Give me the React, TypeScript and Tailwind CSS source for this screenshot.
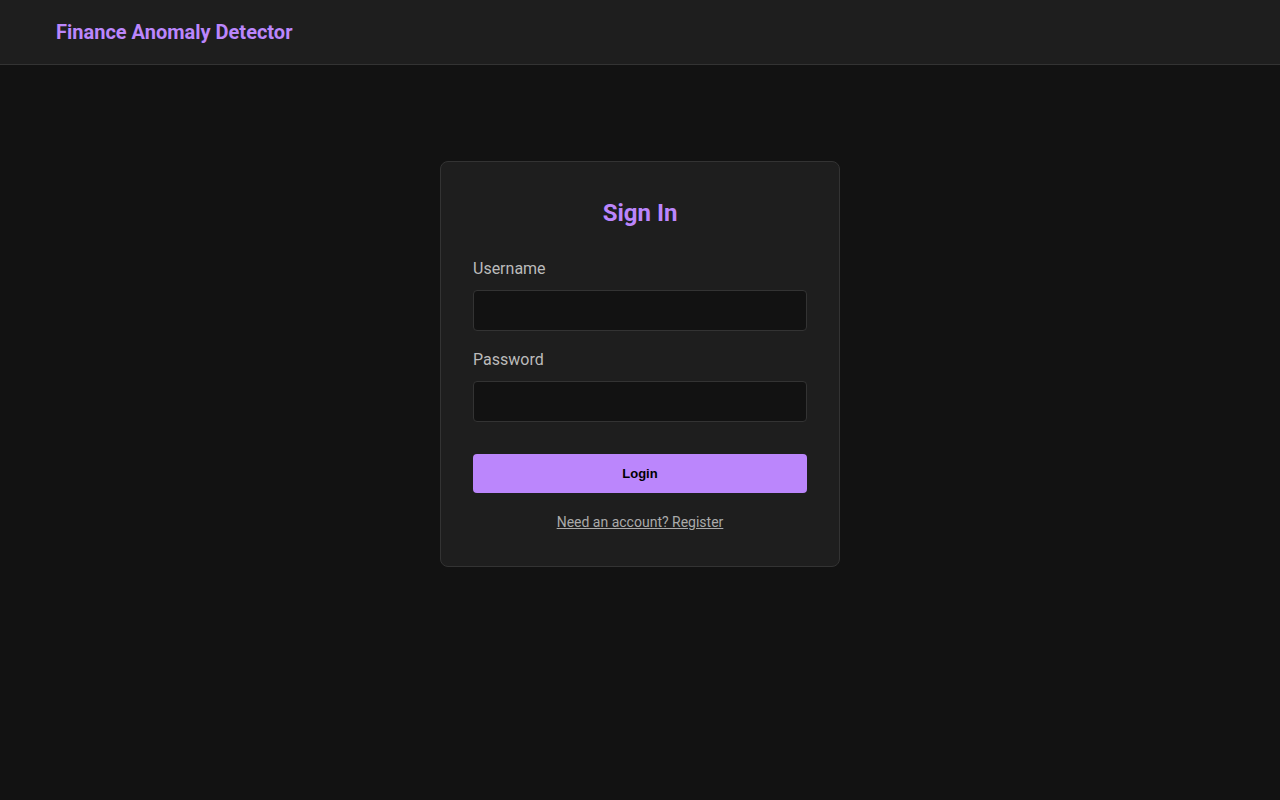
export default function App() {
  return (
    <div
      className="min-h-screen bg-[#121212] text-[#e0e0e0]"
      style={{ fontFamily: "Roboto, 'Liberation Sans', sans-serif" }}
    >
      <header className="h-[65px] bg-[#1e1e1e] border-b border-[#333] flex items-center px-14">
        <h1 className="text-[20px] font-bold text-[#bb86fc]">Finance Anomaly Detector</h1>
      </header>

      <main className="flex justify-center pt-24">
        <div className="w-[400px] bg-[#1e1e1e] border border-[#333] rounded-lg px-8 pt-8 pb-[34px]">
          <h2 className="text-2xl font-bold text-[#bb86fc] text-center leading-9 mt-[1px] mb-[26px]">
            Sign In
          </h2>

          <form onSubmit={(e) => e.preventDefault()}>
            <div className="mb-[17px]">
              <label className="block text-base leading-6 text-[#bbbbbb] mb-[9px]">Username</label>
              <input
                type="text"
                className="block w-full h-[41px] bg-[#121212] border border-[#333] rounded px-3 text-[#e0e0e0] outline-none"
              />
            </div>
            <div>
              <label className="block text-base leading-6 text-[#bbbbbb] mb-[9px]">Password</label>
              <input
                type="password"
                className="block w-full h-[41px] bg-[#121212] border border-[#333] rounded px-3 text-[#e0e0e0] outline-none"
              />
            </div>

            <button
              type="submit"
              className="mt-8 w-full h-[39px] bg-[#bb86fc] text-black font-bold text-[13px] rounded"
              style={{ fontFamily: "'Liberation Sans', Arial, sans-serif" }}
            >
              Login
            </button>
          </form>

          <p className="text-center mt-[19px] leading-5">
            <a href="#" className="text-sm text-[#aaaaaa] underline">
              Need an account? Register
            </a>
          </p>
        </div>
      </main>
    </div>
  );
}
